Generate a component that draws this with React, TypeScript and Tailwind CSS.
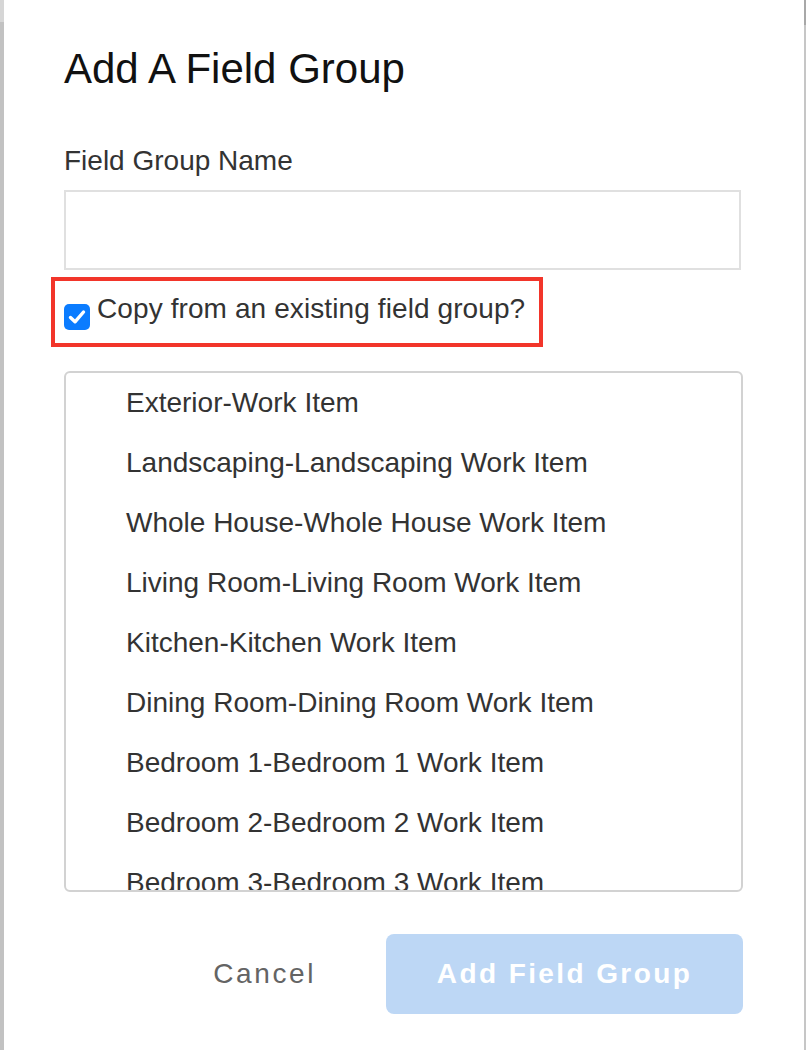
import React from "react";

const items = [
  "Exterior-Work Item",
  "Landscaping-Landscaping Work Item",
  "Whole House-Whole House Work Item",
  "Living Room-Living Room Work Item",
  "Kitchen-Kitchen Work Item",
  "Dining Room-Dining Room Work Item",
  "Bedroom 1-Bedroom 1 Work Item",
  "Bedroom 2-Bedroom 2 Work Item",
  "Bedroom 3-Bedroom 3 Work Item",
];

export default function App() {
  return (
    <div
      className="flex h-[1050px] w-[806px] overflow-hidden bg-[#c4c4c4]"
      style={{ fontFamily: '"Liberation Sans", Arial, Helvetica, sans-serif' }}
    >
      <div className="flex w-[4px] flex-col">
        <div className="h-[22px] bg-[#d6d6d6]" />
        <div className="flex-1 bg-[#c2c2c2]" />
      </div>
      <div className="flex w-[800px] flex-col bg-white pl-[60px] pr-[61px]">
        <h1 className="mt-[45px] text-[42px] leading-[48px] font-normal text-[#111]">
          Add A Field Group
        </h1>
        <label className="mt-[52px] text-[28px] leading-[32px] text-[#333]">
          Field Group Name
        </label>
        <input
          type="text"
          className="mt-[13px] h-[80px] w-[677px] border-2 border-[#e0e0e0] bg-white px-3 text-[28px] outline-none"
        />
        <div className="mt-[7px] ml-[-13px] flex h-[70px] w-fit border-4 border-[#f2352a] pl-[9px] pr-[14px]">
          <div className="mt-[23px] flex h-[26px] w-[26px] items-center justify-center rounded-[5px] bg-[#0b7cff]">
            <svg width="22" height="22" viewBox="0 0 22 22" fill="none">
              <path
                d="M4.5 11.5 L9 15.8 L17.5 6"
                stroke="white"
                strokeWidth="3.4"
                strokeLinecap="round"
                strokeLinejoin="round"
              />
            </svg>
          </div>
          <span className="mt-[12px] ml-[7px] text-[28px] leading-[32px] tracking-[0.1px] text-[#333]">
            Copy from an existing field group?
          </span>
        </div>
        <div className="mt-[24px] h-[521px] overflow-hidden rounded-[6px] border-2 border-[#d2d2d2]">
          {items.map((t) => (
            <div
              key={t}
              className="h-[60px] pl-[60px] text-[28px] leading-[60px] whitespace-nowrap text-[#333]"
            >
              {t}
            </div>
          ))}
        </div>
        <div className="mt-[42px] flex items-center justify-end">
          <button className="mr-[70px] text-[28px] leading-[32px] tracking-[2.6px] text-[#646464]">
            Cancel
          </button>
          <button className="flex h-[80px] w-[357px] items-center justify-center rounded-[8px] bg-[#bdd7f5] text-[28px] font-bold tracking-[2.4px] text-white">
            Add Field Group
          </button>
        </div>
      </div>
      <div className="flex w-[2px] flex-col">
        <div className="h-[25px] bg-[#a8a8a8]" />
        <div className="flex-1 bg-[#c6c6c6]" />
      </div>
    </div>
  );
}
